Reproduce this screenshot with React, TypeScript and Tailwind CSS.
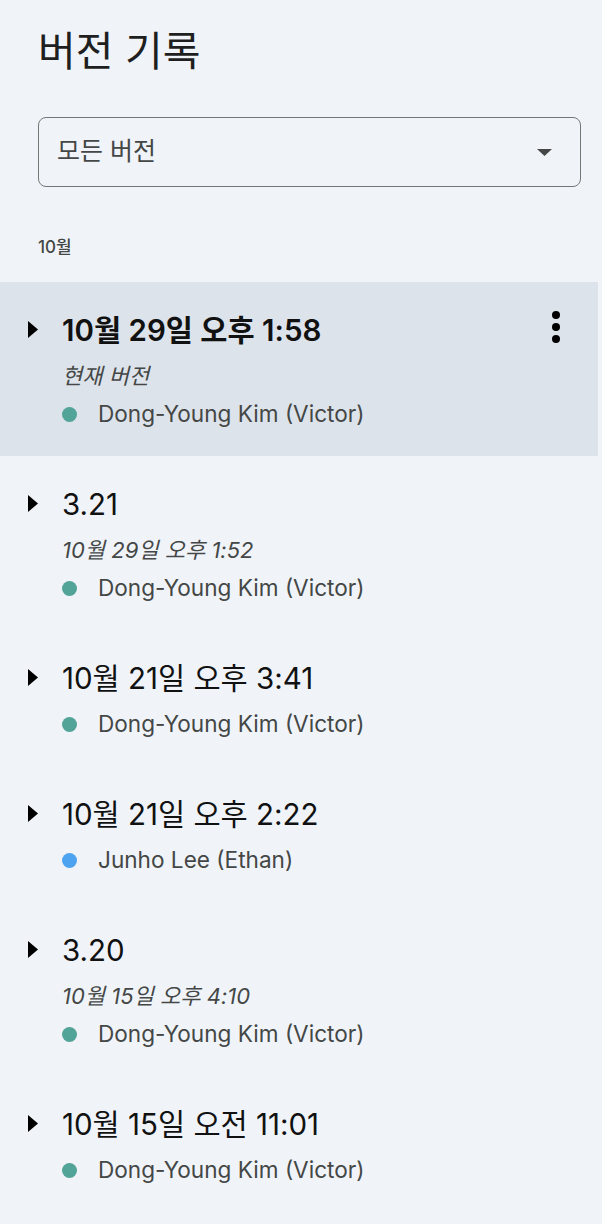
const FONT = '"Inter", "Noto Sans CJK KR", sans-serif'

interface VersionDto {
  id: number
  title: string
  subtitle?: string
  author: string
  color: string
  current?: boolean
}

const versions: VersionDto[] = [
  { id: 1, title: '10월 29일 오후 1:58', subtitle: '현재 버전', author: 'Dong-Young Kim (Victor)', color: '#52a398', current: true },
  { id: 2, title: '3.21', subtitle: '10월 29일 오후 1:52', author: 'Dong-Young Kim (Victor)', color: '#52a398' },
  { id: 3, title: '10월 21일 오후 3:41', author: 'Dong-Young Kim (Victor)', color: '#52a398' },
  { id: 4, title: '10월 21일 오후 2:22', author: 'Junho Lee (Ethan)', color: '#4da3f0' },
  { id: 5, title: '3.20', subtitle: '10월 15일 오후 4:10', author: 'Dong-Young Kim (Victor)', color: '#52a398' },
  { id: 6, title: '10월 15일 오전 11:01', author: 'Dong-Young Kim (Victor)', color: '#52a398' },
]

function VersionRow({ v }: { v: VersionDto }) {
  return (
    <div className={`flex mr-[4px] pt-[29px] pb-[23px] ${v.current ? 'bg-[#dde3ea]' : ''}`}>
      {/* 펼치기 화살표 */}
      <div className="w-[62px] shrink-0 pl-[28px] pt-[10px]">
        <svg width="10" height="17" viewBox="0 0 10 17">
          <path d="M0 0 L10 8.5 L0 17 Z" fill="#000" />
        </svg>
      </div>
      <div className="flex-1 min-w-0">
        <div
          className={`h-[38px] leading-[38px] text-[29.5px] text-[#111] mb-2 ${v.current ? 'font-semibold' : 'font-normal'}`}
        >
          {v.title}
        </div>
        {v.subtitle && (
          <div className="h-[38px] leading-[38px] text-[22px] italic text-[#444746]">{v.subtitle}</div>
        )}
        <div className="h-[38px] flex items-center">
          <span className="w-[15px] h-[15px] rounded-full shrink-0" style={{ backgroundColor: v.color }} />
          <span className="ml-[21px] text-[22.6px] text-[#444746]">{v.author}</span>
        </div>
      </div>
      {v.current && (
        <div className="w-[84px] shrink-0 flex flex-col items-center gap-[4px] pt-[0px]">
          <span className="w-[8px] h-[8px] rounded-full bg-black" />
          <span className="w-[8px] h-[8px] rounded-full bg-black" />
          <span className="w-[8px] h-[8px] rounded-full bg-black" />
        </div>
      )}
    </div>
  )
}

export default function App() {
  return (
    <div className="w-[602px] h-[1224px] bg-[#f0f4f9] overflow-hidden" style={{ fontFamily: FONT }}>
      {/* 상단 */}
      <div className="px-[38px] pt-[25px]">
        <h1 className="h-[52px] leading-[52px] text-[41px] font-normal text-[#1f1f1f]">버전 기록</h1>
        <div className="mt-[40px] h-[70px] w-[543px] rounded-lg border-[1.5px] border-[#747775] flex items-center justify-between pl-[18px] pr-[28px]">
          <span className="text-[25px] text-[#444746]">모든 버전</span>
          <svg width="15" height="7" viewBox="0 0 15 7">
            <path d="M0 0 L15 0 L7.5 7 Z" fill="#444746" />
          </svg>
        </div>
        <div className="mt-[48px] h-[24px] leading-[24px] text-[17px] font-medium text-[#444746]">10월</div>
      </div>

      {/* 버전 목록 */}
      <div className="mt-[23px]">
        {versions.map((v) => (
          <VersionRow key={v.id} v={v} />
        ))}
      </div>
    </div>
  )
}
